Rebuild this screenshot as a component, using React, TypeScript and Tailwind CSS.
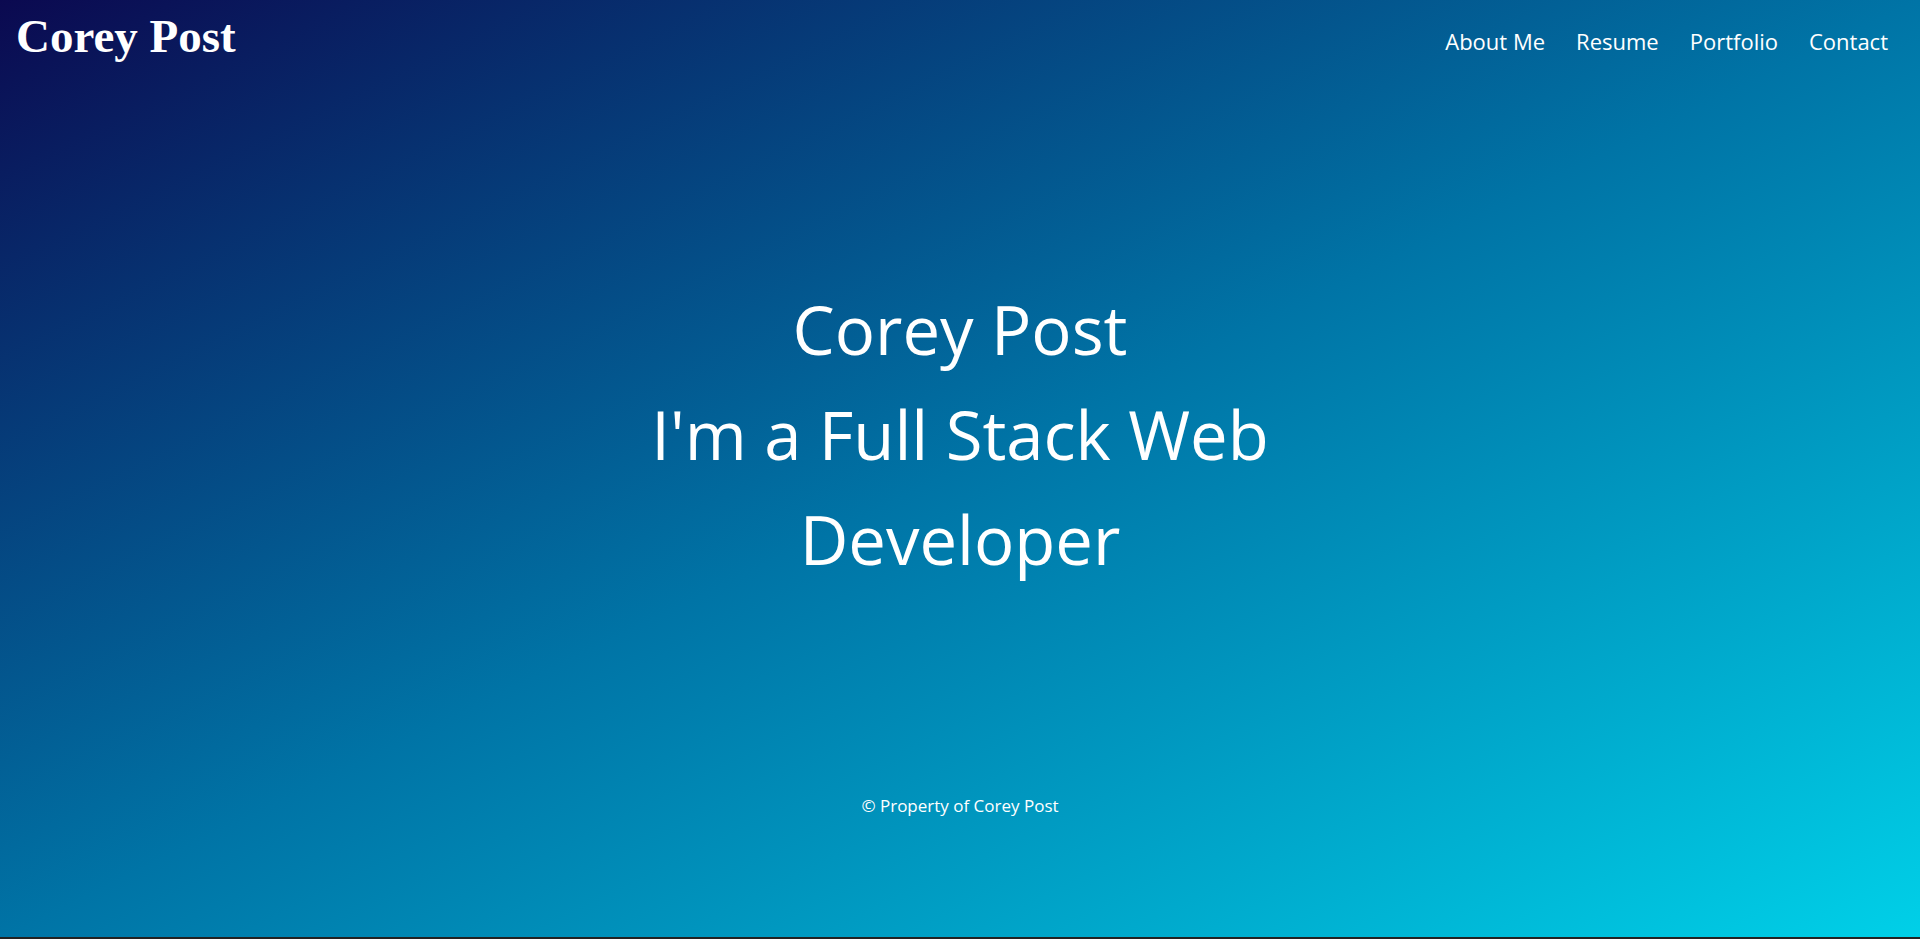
const links = ['About Me', 'Resume', 'Portfolio', 'Contact']

export default function App() {
  return (
    <div className="flex h-[939px] flex-col bg-[linear-gradient(to_bottom_right,#0b0950,#0074a6,#00d0e8)] text-white font-['Open_Sans',sans-serif]">
      <header className="flex h-[70px] items-start justify-between pl-4 pr-8">
        <h1 className="pt-[13px] font-['Liberation_Serif',serif] text-[47px] font-bold leading-[47px]">
          Corey Post
        </h1>
        <nav className="flex gap-[31px] pt-[26px]">
          {links.map((l) => (
            <a key={l} href="#" className="text-[22px] leading-[30px] text-white">
              {l}
            </a>
          ))}
        </nav>
      </header>

      <main className="flex flex-1 flex-col items-center">
        <div className="mt-[207px] max-w-[760px] text-center text-[67px] leading-[105px]">
          <p>Corey Post</p>
          <p>I'm a Full Stack Web Developer</p>
        </div>
        <footer className="mt-[202px] text-[17px] leading-6">© Property of Corey Post</footer>
      </main>

      <div className="h-[2px] bg-[#222]" />
    </div>
  )
}
